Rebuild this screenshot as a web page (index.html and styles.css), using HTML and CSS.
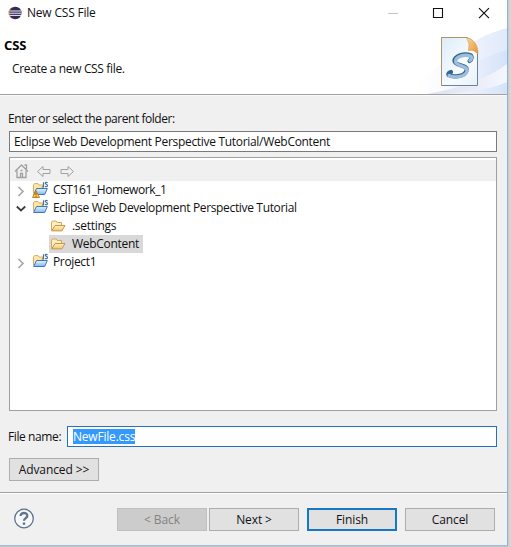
FILE: index.html
```html
<!DOCTYPE html>
<html lang="en">
<head>
<meta charset="utf-8">
<title>New CSS File</title>
<link rel="stylesheet" href="styles.css">
</head>
<body>
<svg class="defs" width="0" height="0" aria-hidden="true">
  <defs>
    <linearGradient id="gold" x2="0" y2="1"><stop stop-color="#fff3c9"/><stop offset="1" stop-color="#f1c56b"/></linearGradient>
    <linearGradient id="sky" x2="0" y2="1"><stop stop-color="#e6f5ff"/><stop offset="1" stop-color="#82b6ef"/></linearGradient>
    <symbol id="folder" viewBox="0 0 16 16">
      <path d="M1.500 12.500V4.200l1-1.200h3.700l1 1.500h4.300v3" fill="#ffeebd" stroke="#d3a85c"/>
      <path d="M1.700 12.900 5 7.500h10l-3.200 5.400z" fill="url(#gold)" stroke="#c9964a"/>
    </symbol>
    <symbol id="project" viewBox="0 0 17 16">
      <path d="M1.500 12V4l1-1.500h3.500L7 4h4.500v4" fill="#ffe5a5" stroke="#d9b068"/>
      <path d="M1.600 13.500 4.500 7.500h10.800l-2.600 6z" fill="url(#sky)" stroke="#3f77bd"/>
      <path d="M11.500 1.200v3.600q0 1.400-1.800 1.200M15.700 1.800q-2.300-1-2.400.4c0 1.300 2.400 1 2.200 2.500-.2 1.300-1.700 1.200-2.700.7" fill="none" stroke="#44749c" stroke-width="1.200"/>
    </symbol>
  </defs>
</svg>
<main class="dialog">
  <header class="banner">
    <svg class="swoosh" width="150" height="94" viewBox="0 0 150 94" aria-hidden="true">
      <defs>
        <linearGradient id="haze"><stop stop-color="#fff" stop-opacity="0"/><stop offset=".5" stop-color="#f4f6fd"/><stop offset="1" stop-color="#e0eafb"/></linearGradient>
        <linearGradient id="haze2"><stop stop-color="#fff" stop-opacity="0"/><stop offset="1" stop-color="#cddcf6"/></linearGradient>
        <linearGradient id="haze3"><stop stop-color="#dcdff0"/><stop offset="1" stop-color="#f4f7fe"/></linearGradient>
      </defs>
      <path d="M50 94C75 70 110 38 150 28V94z" fill="url(#haze)"/>
      <path d="M70 94C95 75 120 58 150 50V94z" fill="url(#haze2)" opacity=".6"/>
      <path d="M122 79Q135 75 150 64V82Q130 91 90 94H70Q100 89 122 79z" fill="url(#haze3)"/>
    </svg>
    <div class="titlebar">
      <svg class="eclipse" width="14" height="14" viewBox="0 0 14 14"><circle cx="6.500" cy="7" r="6.200" fill="#efac50"/><circle cx="7.400" cy="7" r="6.200" fill="#332b58"/><path d="M1.300 5h12M1 7.200h12.500M1.400 9.400h11.800" stroke="#eeeefa"/></svg>
      <span class="t title">New CSS File</span>
      <svg class="controls" width="104" height="14" viewBox="0 0 104 14"><path d="M1 7.500h10" stroke="#c5c5c5"/><path d="M46.500 2.500h9v9h-9z" fill="none" stroke="#111" stroke-width="1.100"/><path d="M92 2.200l10 10M102 2.200l-10 10" stroke="#111" stroke-width="1.150"/></svg>
    </div>
    <h1 class="t">CSS</h1>
    <p class="t desc">Create a new CSS file.</p>
    <svg class="page" width="42" height="52" viewBox="0 0 42 52">
      <defs>
        <linearGradient id="sheet" x2="1" y2="1"><stop stop-color="#dcecf7"/><stop offset=".6" stop-color="#f8fcff"/><stop offset="1" stop-color="#e6f0f8"/></linearGradient>
        <linearGradient id="fold" x2="1" y2="1"><stop stop-color="#fbd69c"/><stop offset="1" stop-color="#e7952e"/></linearGradient>
      </defs>
      <path d="M2.500 1.500H28q9 5 10.500 16v32h-36z" fill="url(#sheet)" stroke="#6d8494"/>
      <path d="M2.500 49.500V1.500H28" fill="none" stroke="#a9966f"/>
      <path d="M27.500 1.500C35 3 39.500 10 38.800 18Q35 13 29.500 14.500 31.500 8 27.500 1.500z" fill="url(#fold)" stroke="#cf9449" stroke-width=".6"/>
      <g fill="none" stroke-linecap="round" stroke-linejoin="round">
        <path d="M30.500 25Q34 22 32 19.500C25 16.500 15.500 20 15.500 25C15.500 30 29.500 28.500 27.500 34.500C25.500 41 13.500 41.500 9.500 39Q8.500 37 12 36" stroke="#36658f" stroke-width="4.200"/>
        <path d="M31 24.500Q34 22 32 20.300C25 17.500 16.500 21 16.500 25.500C16.500 30.500 30 29.500 28 35.500C26 41.500 14 42 10 39.500" stroke="#9cbddb" stroke-width="3.300"/>
      </g>
    </svg>
  </header>
  <section class="body">
    <label class="t parent">Enter or select the parent folder:</label>
    <div class="field pathfield"><span class="t path">Eclipse Web Development Perspective Tutorial/WebContent</span></div>
    <div class="tree">
      <div class="toolbar">
        <svg width="64" height="16" viewBox="0 0 64 16" fill="none" stroke="#a0a0a0"><path d="M1 8.500 7.500 2l6.500 6.500M10.500 2h2v4M3 7.500v7h9v-7M6.500 14V10.500h2V14M6.500 7.500h2" stroke-width="1.300"/><path d="M23.500 8.500 29 3.500v3h7v4h-7v3zM59.500 8.500 54 3.500v3h-7v4h7v3z"/></svg>
      </div>
      <div class="row">
        <svg class="twist" width="10" height="10" viewBox="0 0 10 10"><path d="M2.500 2 7 6.500 2.500 11" fill="none" stroke="#a5a5a5" stroke-width="1.600"/></svg>
        <span class="icon"><svg width="17" height="16"><use href="#project"/></svg><svg class="warning" width="8" height="8" viewBox="0 0 8 8"><path d="M4 .5 7.500 7.500h-7z" fill="#ffc64b" stroke="#c98522"/><path d="M4 2.500v2.500M4 5.800v1" stroke="#634010"/></svg></span>
        <span class="t n1">CST161_Homework_1</span>
      </div>
      <div class="row">
        <svg class="twist" width="10" height="10" viewBox="0 0 10 10"><path d="M.8 3.500 5 7.500 9.200 3.500" fill="none" stroke="#3d3d3d" stroke-width="1.800"/></svg>
        <span class="icon"><svg width="17" height="16"><use href="#project"/></svg></span>
        <span class="t n2">Eclipse Web Development Perspective Tutorial</span>
      </div>
      <div class="row child"><span class="node"><svg width="16" height="16"><use href="#folder"/></svg><span class="t n3">.settings</span></span></div>
      <div class="row child"><span class="node selected"><svg width="16" height="16"><use href="#folder"/></svg><span class="t n4">WebContent</span></span></div>
      <div class="row">
        <svg class="twist" width="10" height="10" viewBox="0 0 10 10"><path d="M2.500 2 7 6.500 2.500 11" fill="none" stroke="#a5a5a5" stroke-width="1.600"/></svg>
        <span class="icon"><svg width="17" height="16"><use href="#project"/></svg></span>
        <span class="t n5">Project1</span>
      </div>
    </div>
    <div class="filename"><label class="t fl">File name:</label><div class="field focus"><span class="t mark">NewFile.css</span></div></div>
    <div class="button adv"><span class="t">Advanced &gt;&gt;</span></div>
  </section>
  <footer class="footer">
    <svg class="help" width="22" height="22" viewBox="0 0 22 22" fill="none" stroke="#62738f"><circle cx="11" cy="10.500" r="9.300" fill="#f6f8fa" stroke-width="1.300"/><path d="M7.600 8C7.500 4 14.400 4 14.300 7.900C14.200 10.200 11 10.200 11 12.800" stroke-width="2.300"/><path d="M11 14.500v2.300" stroke-width="2.400"/></svg>
    <div class="button disabled"><span class="t">&lt; Back</span></div>
    <div class="button next"><span class="t">Next &gt;</span></div>
    <div class="button finish"><span class="t">Finish</span></div>
    <div class="button cancel"><span class="t">Cancel</span></div>
  </footer>
</main>
</body>
</html>
```
FILE: styles.css
```css
* { box-sizing: border-box; }
body {
  margin: 0;
  width: 511px;
  height: 547px;
  overflow: hidden;
  background: linear-gradient(90deg, #bfc5cb 508px, #c8c8c8 508px, #dcdcdc);
  font: 12px/18px "Open Sans", "Noto Sans", sans-serif;
  color: #111;
}
svg { display: block; flex: none; }
.defs { position: absolute; }
.t { white-space: nowrap; }
.dialog {
  width: 508px;
  height: 546px;
  display: flex;
  flex-direction: column;
  background: #f0f0f0;
  border-right: 1px solid #8bb4dc;
  border-bottom: 1px solid #a3bddb;
}
.banner {
  position: relative;
  height: 95px;
  background: #fff;
  border-bottom: 1px solid #a0a0a0;
}
.swoosh { position: absolute; right: 0; top: 0; }
.page { position: absolute; left: 439px; top: 36px; }
.titlebar { position: relative; display: flex; align-items: center; height: 25px; padding-left: 8px; }
.title { margin-left: 5px; letter-spacing: -.2px; }
.controls { margin-left: auto; margin-right: 16px; }
h1 { position: relative; margin: 11px 0 0 4px; font-size: 13px; line-height: 18px; letter-spacing: -.1px; color: #000; }
.desc { position: relative; margin: 6px 0 0 12px; letter-spacing: -.34px; }
.body { display: flex; flex-direction: column; height: 397px; padding: 15px 10px 0 8px; border-top: 1px solid #fafafa; }
.parent { height: 20px; line-height: 16px; letter-spacing: -.45px; }
.field { height: 21px; margin-left: 1px; padding: 0 0 0 5px; background: #fff; border: 1px solid #7a7a7a; line-height: 19px; }
.pathfield { padding-left: 4px; }
.path { letter-spacing: -.31px; }
.tree { height: 254px; margin: 5px 0 0 1px; border: 1px solid #a0a0a0; background: #fff; }
.toolbar { height: 23px; padding: 3px 0 0 4px; background: #f0f0f0; border-top: 2px solid #fff; }
.row { display: flex; align-items: center; height: 18px; padding-left: 6px; }
.twist { margin-right: 6px; overflow: visible; }
.icon { position: relative; width: 21px; }
.icon svg { margin-top: -2px; }
.icon .warning { position: absolute; left: 0; bottom: -1px; }
.child { padding-left: 39px; }
.node { display: flex; align-items: center; height: 18px; padding: 0 4px 0 1px; }
.node .t { margin-left: 6px; }
.n1 { letter-spacing: -.4px; }
.n2 { letter-spacing: -.34px; }
.n3, .n4 { letter-spacing: -.3px; }
.n5 { letter-spacing: -.35px; }
.selected { width: 94px; background: #d9d9d9; }
.filename { display: flex; align-items: center; margin-top: 15px; }
.fl { width: 58px; letter-spacing: -.4px; }
.filename .field { flex: 1; }
.focus { border-color: #2672b5; display: flex; align-items: center; }
.mark { height: 15px; line-height: 15px; letter-spacing: -.2px; background: #3399ff; color: #fff; }
.button { width: 90px; height: 23px; flex: none; display: flex; align-items: center; justify-content: center; background: #e1e1e1; border: 1px solid #adadad; line-height: 21px; letter-spacing: -.1px; }
.adv { margin: 11px 0 0 1px; }
.footer { display: flex; align-items: flex-start; height: 52px; padding: 15px 12px 0 13px; border-top: 1px solid #a0a0a0; box-shadow: inset 0 1px #fff; }
.disabled { margin-left: auto; color: #838383; background: #ccc; border-color: #bfbfbf; }
.next { margin-left: 2px; }
.finish { margin-left: 8px; border: 2px solid #1878c6; }
.cancel { margin-left: 8px; }
```
